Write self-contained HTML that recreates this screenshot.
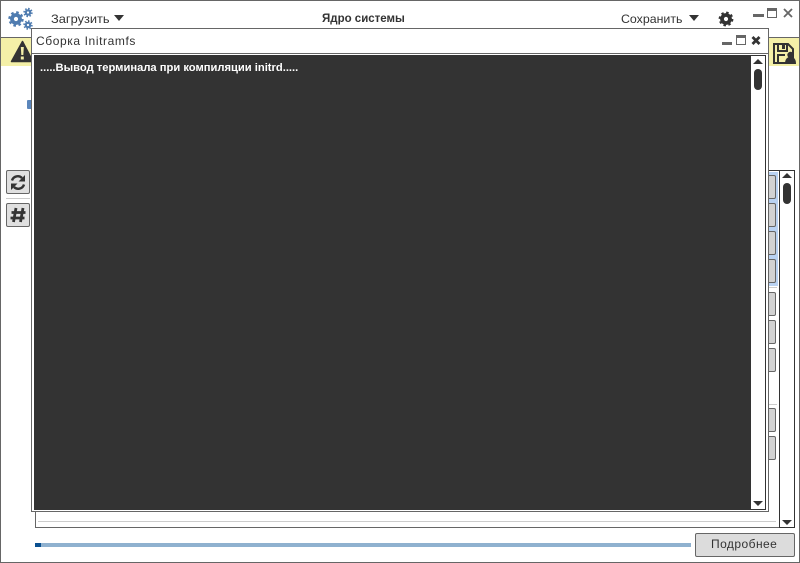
<!DOCTYPE html>
<html><head><meta charset="utf-8">
<style>
html,body{margin:0;padding:0;background:#fff}
#p{position:relative;width:800px;height:563px;overflow:hidden;background:#fff;font-family:"Liberation Sans","DejaVu Sans",sans-serif;color:#333}
#p div{position:absolute;box-sizing:border-box}
#p svg{position:absolute;left:0;top:0}
.t{white-space:nowrap;font-size:12px;line-height:14px}
.b{background:#d2d2d2;border:1px solid #666;border-radius:2px}
</style></head><body>
<div id="p">
<div style="left:0;top:0;width:800px;height:563px;border:1px solid #666"></div>
<div style="left:1px;top:37px;width:798px;height:1px;background:#666"></div>
<div style="left:1px;top:38px;width:798px;height:28px;background:#f4f0a8"></div>
<div class="t" style="left:51px;top:12px;width:58px"><span style="display:inline-block;transform-origin:0 0;transform:scaleX(1.07)">Загрузить</span></div>
<div class="t" style="left:322px;top:12px;font-weight:bold;font-size:11.5px">Ядро системы</div>
<div class="t" style="left:621px;top:12px"><span style="display:inline-block;transform-origin:0 0;transform:scaleX(1.03)">Сохранить</span></div>

<svg width="800" height="563" viewBox="0 0 800 563">
 <g fill="none" stroke="#4f7cb0">
  <circle cx="16" cy="19" r="4" stroke-width="3.800"/>
  <circle cx="16" cy="19" r="6.400" stroke-width="2.600" stroke-dasharray="2.510 2.510"/>
  <circle cx="28" cy="12.500" r="2.200" stroke-width="2.200"/>
  <circle cx="28" cy="12.500" r="3.800" stroke-width="1.800" stroke-dasharray="1.490 1.490"/>
  <circle cx="28" cy="25" r="2.200" stroke-width="2.200"/>
  <circle cx="28" cy="25" r="3.800" stroke-width="1.800" stroke-dasharray="1.490 1.490"/>
 </g>
 <path d="M22.500 41.500 L33 61.500 H11.500 Z" fill="#333" stroke="#333" stroke-width="1.500" stroke-linejoin="round"/>
 <path d="M20.800 47h3l-.5 8h-2z" fill="#f4f0a8"/><rect x="20.800" y="56.500" width="3" height="3" fill="#f4f0a8"/>
</svg>

<!-- list -->
<div style="left:35px;top:170px;width:760px;height:358px;border:1px solid #666;border-top-color:#333"></div>
<div style="left:730px;top:172px;width:48px;height:114px;background:#b9d2f2"></div>
<div class="b" style="left:759px;top:175px;width:17px;height:24px"></div>
<div class="b" style="left:759px;top:203px;width:17px;height:24px"></div>
<div class="b" style="left:759px;top:231px;width:17px;height:24px"></div>
<div class="b" style="left:759px;top:259px;width:17px;height:24px"></div>
<div style="left:740px;top:287px;width:37px;height:1px;background:#ccc"></div>
<div class="b" style="left:759px;top:292px;width:17px;height:24px"></div>
<div class="b" style="left:759px;top:320px;width:17px;height:24px"></div>
<div class="b" style="left:759px;top:348px;width:17px;height:24px"></div>
<div style="left:740px;top:404px;width:37px;height:1px;background:#ccc"></div>
<div class="b" style="left:759px;top:408px;width:17px;height:24px"></div>
<div class="b" style="left:759px;top:436px;width:17px;height:24px"></div>
<div style="left:38px;top:521px;width:738px;height:1px;background:#ccc"></div>
<div style="left:779px;top:170px;width:16px;height:358px;background:#fff;border:1px solid #333"></div>
<div style="left:783px;top:183px;width:8px;height:21px;background:#333;border-radius:4px"></div>

<!-- side -->
<div style="left:27px;top:100px;width:5px;height:9px;background:#5b86bb;border-radius:1px 0 0 1px"></div>
<div class="b" style="left:6px;top:170px;width:24px;height:24px;background:#e0e0e0"></div>
<div style="left:6px;top:198px;width:24px;height:1px;background:#ccc"></div>
<div class="b" style="left:6px;top:203px;width:24px;height:24px;background:#e0e0e0"></div>

<!-- progress -->
<div style="left:35px;top:543px;width:656px;height:4px;background:#8fb1cf"></div>
<div style="left:35px;top:543px;width:6px;height:4px;background:#0a5090"></div>
<div class="b" style="left:695px;top:533px;width:100px;height:24px;background:#dcdcdc"></div>
<div class="t" style="left:711px;top:537px;letter-spacing:.45px">Подробнее</div>

<!-- dialog -->
<div style="left:31px;top:28px;width:738px;height:484px;background:#fff;border:1px solid #666"></div>
<div class="t" style="left:36px;top:34px;letter-spacing:.6px">Сборка Initramfs</div>
<div style="left:32px;top:53px;width:736px;height:1px;background:#666"></div>
<div style="left:34px;top:55px;width:732px;height:455px;border:1px solid #333"></div>
<div style="left:34px;top:55px;width:717px;height:454px;background:#333"></div>
<div class="t" style="left:40px;top:61px;color:#fff;font-size:11.2px;font-weight:bold">.....Вывод терминала при компиляции initrd.....</div>
<div style="left:754px;top:69px;width:8px;height:21px;background:#333;border-radius:4px"></div>

<svg width="800" height="563" viewBox="0 0 800 563">
 <g fill="#333">
  <path d="M114 15h10l-5 6z"/>
  <path d="M689 15h10l-5 6z"/>
  <path d="M753 64h10l-5-5z"/>
  <path d="M753 501h10l-5 5z"/>
  <path d="M782 178h10l-5-5z"/>
  <path d="M782 520h10l-5 5z"/>
 </g>
 <g fill="none" stroke="#333">
  <circle cx="726" cy="19" r="4" stroke-width="3.800"/>
  <circle cx="726" cy="19" r="6.200" stroke-width="2.400" stroke-dasharray="2.430 2.430"/>
 </g>
 <g>
  <rect x="753" y="14" width="11" height="3" fill="#666"/>
  <rect x="767.500" y="8.500" width="9" height="9" fill="#fff" stroke="#666"/><rect x="767" y="8" width="10" height="3" fill="#666"/>
  <path d="M784 9l8 8M792 9l-8 8" stroke="#666" stroke-width="1.800" fill="none"/>
  <rect x="722" y="42" width="10" height="3" fill="#666"/>
  <rect x="736.500" y="35.500" width="9" height="9" fill="#fff" stroke="#666"/><rect x="736" y="35" width="10" height="3" fill="#666"/>
  <path d="M752.500 37l7 7M759.500 37l-7 7" stroke="#333" stroke-width="2.800" fill="none"/>
 </g>
 <g fill="none" stroke="#333" stroke-width="2">
  <path d="M774 44h14l5 5v14h-19z"/>
  <path d="M778 44v7h9v-7"/>
  <path d="M778 63v-8h7"/>
 </g>
 <rect x="782" y="45" width="3" height="4" fill="#333"/>
 <circle cx="790.500" cy="55" r="3.200" fill="#333"/>
 <path d="M785 64c0-5 2-7 5.500-7s5.500 2 5.500 7z" fill="#333"/>
 <g fill="none" stroke="#333" stroke-width="2.400">
  <path d="M12 180.500a6 6 0 0 1 10-2.500"/>
  <path d="M24 184.500a6 6 0 0 1-10 2.500"/>
 </g>
 <path d="M25 175v6.500h-6.500zM11 190v-6.500h6.500z" fill="#333"/>
 <path d="M16 208l-2.500 14M23 208l-2.500 14M11.500 212.500h14M10.500 218h14" stroke="#333" stroke-width="2.800" fill="none"/>
</svg>
</div>
</body></html>
